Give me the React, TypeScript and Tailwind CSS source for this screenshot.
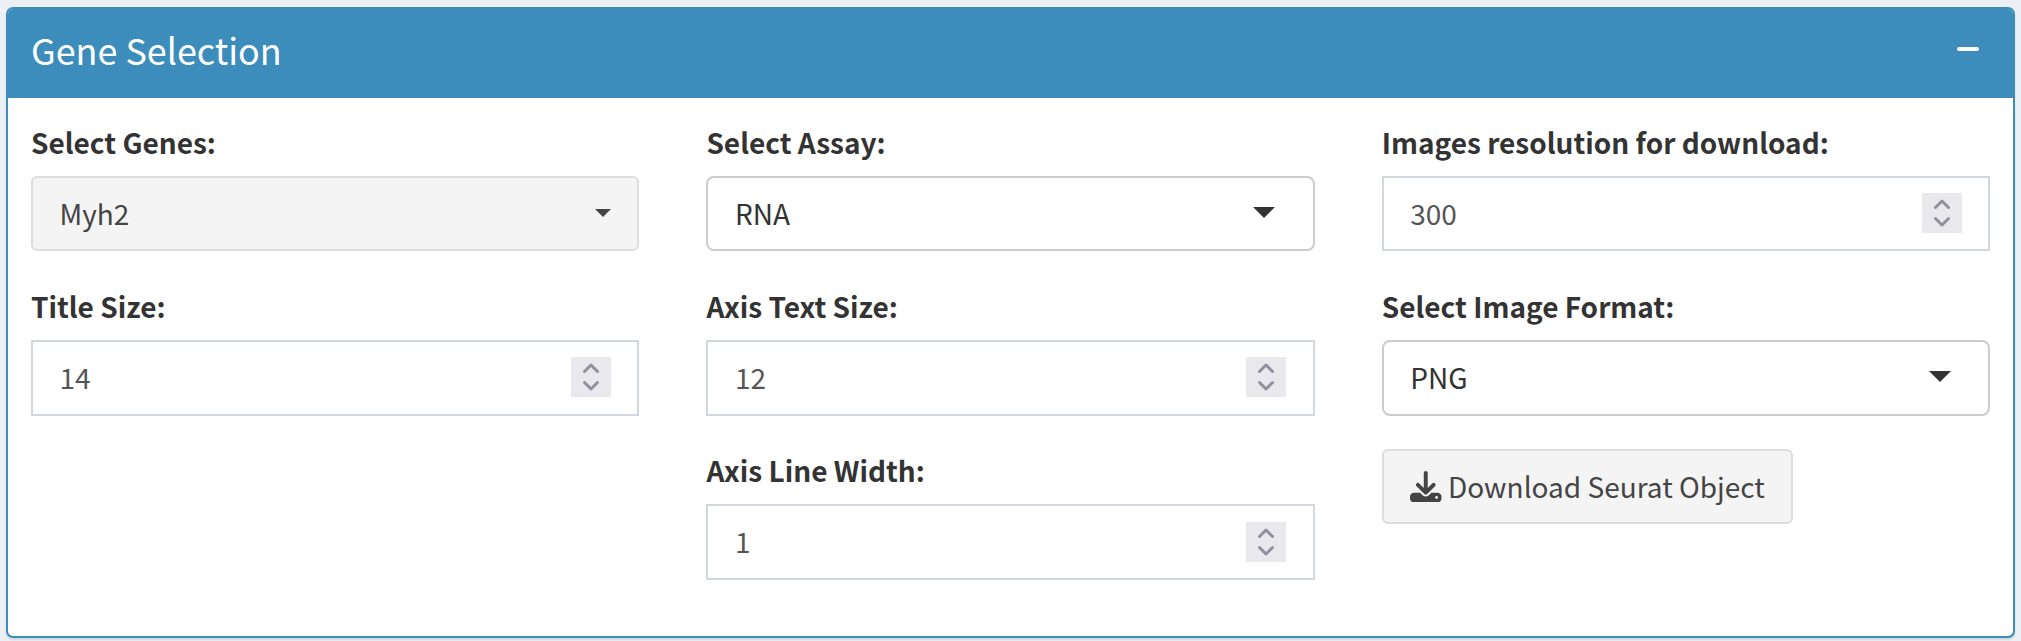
import type { ReactNode } from "react";
import { FaDownload } from "react-icons/fa6";

function Label({ children }: { children: ReactNode }) {
  return (
    <label className="block h-12 shrink-0 text-[28px] leading-[29.4px] font-bold whitespace-nowrap text-[#333]">
      {children}
    </label>
  );
}

function Field({ label, children }: { label: string; children: ReactNode }) {
  return (
    <div className="flex h-[164.2px] flex-col">
      <Label>{label}</Label>
      {children}
    </div>
  );
}

function NumberBox({ value }: { value: string }) {
  return (
    <div className="flex h-[75.4px] items-center justify-between border-2 border-[#d2d6de] bg-white pr-[26.4px] pl-[26.5px] text-[#555]">
      <span className="mb-[1.4px] leading-[40px]">{value}</span>
      <span className="mb-[1px] flex size-10 items-center justify-center bg-[#e9e9ed]">
        <svg
          viewBox="0 0 40 40"
          className="size-10"
          fill="none"
          stroke="#8f8f9d"
          strokeWidth="3"
          strokeLinecap="round"
          strokeLinejoin="round"
        >
          <path d="M13.5 14.5 L20 8 L26.5 14.5" />
          <path d="M13.5 25.5 L20 32 L26.5 25.5" />
        </svg>
      </span>
    </div>
  );
}

function SelectBox({ value }: { value: string }) {
  return (
    <div className="flex h-[75.4px] items-center justify-between rounded-[8px] border-2 border-[#ccc] bg-white pr-[37.4px] pl-[26.5px] text-[#333]">
      <span className="mb-[1.4px] leading-[40px]">{value}</span>
      <svg viewBox="0 0 22 11" className="mb-[2px] h-[11px] w-[22px]" fill="#333">
        <path d="M0 0H22L11 11Z" />
      </svg>
    </div>
  );
}

export default function App() {
  return (
    <div className="h-[641px] w-[2021px] bg-[#ecf0f5] pt-[7px] pl-[6px] font-['Noto_Sans_CJK_SC',sans-serif] text-[28px] text-[#333]">
      <section className="h-[631px] w-[2009px] overflow-hidden rounded-[7px] border-2 border-[#3c8dbc] bg-white shadow-[0_2px_2px_rgba(0,0,0,0.1)]">
        <header className="flex h-[89px] items-center justify-between bg-[#3c8dbc] pr-[34px] pl-[23px] text-white">
          <h3 className="mb-[9px] text-[35.9px] leading-[40px]">Gene Selection</h3>
          <span className="mb-[9px] h-1 w-[22px] rounded-[2px] bg-white" />
        </header>
        <div className="grid grid-cols-[608.4px_608.4px_608.4px] gap-x-[67px] pt-[30px] pl-[23px]">
          <div>
            <Field label="Select Genes:">
              <div className="flex h-[75px] items-center justify-between rounded-[6px] border-2 border-[#ddd] bg-[#f4f4f4] pr-[26.4px] pl-[26.5px] text-[#444]">
                <span className="mb-[1.4px] leading-[40px]">Myh2</span>
                <svg viewBox="0 0 16 8" className="mb-[1px] h-2 w-4" fill="#444">
                  <path d="M0 0H16L8 8Z" />
                </svg>
              </div>
            </Field>
            <Field label="Title Size:">
              <NumberBox value="14" />
            </Field>
          </div>
          <div>
            <Field label="Select Assay:">
              <SelectBox value="RNA" />
            </Field>
            <Field label="Axis Text Size:">
              <NumberBox value="12" />
            </Field>
            <Field label="Axis Line Width:">
              <NumberBox value="1" />
            </Field>
          </div>
          <div>
            <Field label="Images resolution for download:">
              <NumberBox value="300" />
            </Field>
            <Field label="Select Image Format:">
              <SelectBox value="PNG" />
            </Field>
            <button className="-mt-[7px] flex h-[75px] w-[411px] items-center rounded-[6px] border-2 border-[#ddd] bg-[#f4f4f4] pl-[26.3px] text-[#444]">
              <FaDownload className="mb-[1px] size-[31.5px] shrink-0" />
              <span className="mb-[1px] ml-[6.4px] leading-[40px] whitespace-nowrap">
                Download Seurat Object
              </span>
            </button>
          </div>
        </div>
      </section>
    </div>
  );
}
